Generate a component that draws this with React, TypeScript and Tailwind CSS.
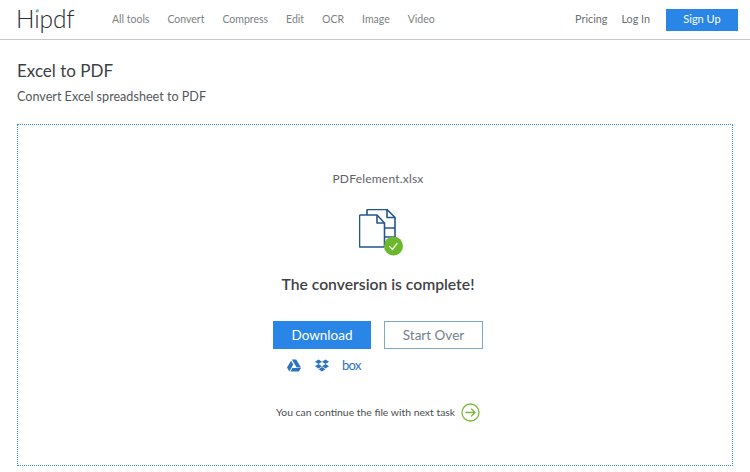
const navItems = ["All tools", "Convert", "Compress", "Edit", "OCR", "Image", "Video"];

function FileIcon() {
  return (
    <svg width="44" height="47" viewBox="0 0 44 47" fill="none" stroke="#23558f" strokeWidth="1.600" strokeLinejoin="round">
      <path d="M8 6V1.500a1 1 0 0 1 1-1h19l8 8v25.500a1 1 0 0 1-1 1h-10" />
      <path d="M28 .5v8h8" />
      <path d="M25 19h11M25 28h11" />
      <path d="M1.500 6h16.500l7.500 8v23a1 1 0 0 1-1 1H1.500a1 1 0 0 1-1-1V7a1 1 0 0 1 1-1z" fill="#fff" />
      <path d="M18 6v8h7.500" />
      <circle cx="34.500" cy="37" r="9.500" fill="#6cb82c" stroke="none" />
      <path d="M30.500 37.500l3 3 4.500-6" stroke="#eaf6dc" strokeWidth="1.300" strokeLinecap="round" />
    </svg>
  );
}

function DriveIcon() {
  return (
    <svg width="14" height="13" viewBox="0 0 14 12" fill="#2b73bd">
      <path d="M4.800 0h4.400l4.800 8H9.600z" />
      <path d="M4.100 1.200L6.300 5 2.300 12 0 8.100z" />
      <path d="M3.400 12l2-3.400H14L11.800 12z" />
    </svg>
  );
}

function DropboxIcon() {
  return (
    <svg width="14" height="13" viewBox="0 0 14 12" fill="#2b73bd">
      <path d="M3.500 0L7 2.200 3.500 4.500 0 2.200z" />
      <path d="M10.500 0L14 2.200l-3.500 2.300L7 2.200z" />
      <path d="M3.500 4.500L7 6.700 3.500 9 0 6.700z" />
      <path d="M10.500 4.500L14 6.700 10.500 9 7 6.700z" />
      <path d="M3.600 9.700L7 7.500l3.400 2.200L7 12z" />
    </svg>
  );
}

export default function App() {
  return (
    <div className="flex h-[472px] w-[750px] flex-col overflow-hidden bg-white font-['Lato','Open_Sans',sans-serif]">
      <header className="flex h-10 shrink-0 items-center border-b border-[#c4c6c9] pl-4 pr-[12px]">
        <div className="w-[96px] text-[24.500px] font-light leading-none tracking-[-0.1px] text-[#2b2e32]">
          H<span className="relative">i<span className="absolute left-[2px] top-[5px] size-[3px] rounded-full bg-[#6cc0e8]" /></span>pdf
        </div>
        <nav className="flex gap-[18px] text-[10.500px] text-[#7c7f83]">
          {navItems.map((item) => (
            <span key={item}>{item}</span>
          ))}
        </nav>
        <div className="ml-auto flex items-center gap-[14px] text-[10.800px] text-[#6b6e72]">
          <span>Pricing</span>
          <span>Log In</span>
          <button className="ml-[2px] h-[22px] w-[72px] bg-[#2a86e6] text-[11px] text-white">Sign Up</button>
        </div>
      </header>

      <main className="flex min-h-0 flex-1 flex-col px-[17px] pb-[6px] pt-[18px]">
        <h1 className="text-[17px] leading-[26px] text-[#3d4044]">Excel to PDF</h1>
        <p className="mt-[3px] text-[12.600px] leading-[20px] text-[#54575b]">Convert Excel spreadsheet to PDF</p>

        <section className="mt-[17px] flex flex-1 flex-col items-center border border-dotted border-[#3d8fd6] pl-[6px] pt-[46px]">
          <div className="text-[12px] leading-[16px] tracking-[0.2px] text-[#5f6266]">PDFelement.xlsx</div>
          <div className="ml-[6px] mt-[22px]"><FileIcon /></div>
          <h2 className="mt-[17px] text-[15.700px] font-semibold leading-[22px] text-[#3f4246]">The conversion is complete!</h2>
          <div className="mt-[26px] flex gap-[13px]">
            <button className="h-[28px] w-[98px] bg-[#2a86e6] text-[13.500px] text-white">Download</button>
            <button className="h-[28px] w-[99px] border border-[#7fa8c4] text-[13.500px] text-[#75808a]">Start Over</button>
          </div>
          <div className="mt-[9px] flex h-[14px] w-[210px] items-center gap-[13.500px] pl-[14px] text-[#2b73bd]">
            <DriveIcon />
            <DropboxIcon />
            <span className="text-[13px] leading-none tracking-[-0.7px]">box</span>
          </div>
          <div className="mt-[31px] flex items-center gap-[6px] text-[10.400px] text-[#4a4d51]">
            <span>You can continue the file with next task</span>
            <svg width="19" height="19" viewBox="0 0 19 19" fill="none" stroke="#7cb83a" strokeWidth="1.300" strokeLinecap="round" strokeLinejoin="round">
              <circle cx="9.500" cy="9.500" r="8.500" />
              <path d="M5 9.500h9M10.500 6l3.500 3.500-3.500 3.500" />
            </svg>
          </div>
        </section>
      </main>
    </div>
  );
}
